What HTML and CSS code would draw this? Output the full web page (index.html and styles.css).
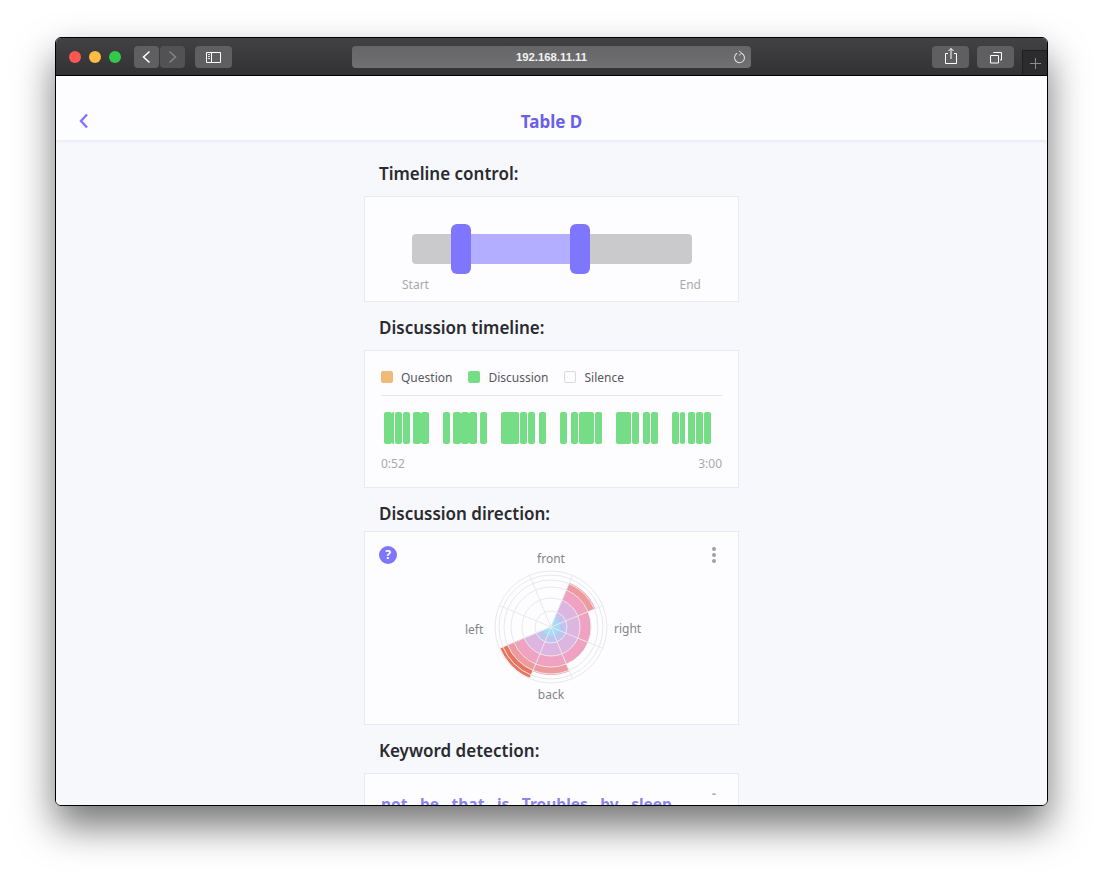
FILE: index.html
```html
<!DOCTYPE html>
<html lang="en">
<head>
    <meta charset="UTF-8">
    <meta name="viewport" content="width=device-width, initial-scale=1.0">
    <title>Table D</title>
    <link rel="stylesheet" href="styles.css">
</head>
<body>
    <div class="window">
        <div class="titlebar">
            <div class="traffic">
                <span class="light light-red"></span>
                <span class="light light-yellow"></span>
                <span class="light light-green"></span>
            </div>
            <div class="history">
                <div class="tool tool-nav">
                    <svg width="25" height="22" viewBox="0 0 25 22"><path d="M15.5 5.5 9.5 11l6 5.5" fill="none" stroke="#fff" stroke-width="1.5"/></svg>
                </div>
                <div class="tool tool-nav tool-off">
                    <svg width="25" height="22" viewBox="0 0 25 22"><path d="M9.5 5.5 15.5 11l-6 5.5" fill="none" stroke="#858587" stroke-width="1.5"/></svg>
                </div>
            </div>
            <div class="tool tool-wide tool-sidebar">
                <svg width="37" height="22" viewBox="0 0 37 22" fill="none" stroke="#fff">
                    <path d="M11.5 6.5h14v10h-14zM16.5 6.5v10"/>
                    <path d="M13 8.5h2M13 10.5h2M13 12.5h2" stroke-width=".8"/>
                </svg>
            </div>
            <div class="urlbar">
                <span class="url">192.168.11.11</span>
                <svg class="reload" width="13" height="14" viewBox="0 0 13 14" fill="none" stroke="#dcdcdc" stroke-width="1.1">
                    <path d="M8.6 3.2a5 5 0 1 1-4.4.1"/>
                    <path d="M6 .8 8.8 3.2 6 5.4" stroke-width="1"/>
                </svg>
            </div>
            <div class="tool tool-wide tool-share">
                <svg width="37" height="22" viewBox="0 0 37 22" fill="none" stroke="#fff">
                    <path d="M16 7.5h-2.5v10h11v-10H22"/>
                    <path d="M19 13V2.5M16.5 5 19 2.5 21.500 5"/>
                </svg>
            </div>
            <div class="tool tool-wide tool-tabs">
                <svg width="37" height="22" viewBox="0 0 37 22" fill="none" stroke="#fff">
                    <path d="M13.500 9.500h8v7.500h-8z"/>
                    <path d="M16.500 7V6.500h8v7.500H23"/>
                </svg>
            </div>
            <div class="newtab">
                <svg width="11" height="11" viewBox="0 0 11 11"><path d="M5.500 0v11M0 5.500h11" stroke="#8c8c8e"/></svg>
            </div>
        </div>

        <div class="page">
            <div class="navbar">
                <svg class="nav-back" width="10" height="16" viewBox="0 0 10 16"><path d="M8 1.500 2 8l6 6.500" fill="none" stroke="#7f76fe" stroke-width="2.400"/></svg>
                <div class="nav-title">Table D</div>
            </div>

            <div class="column">
                <h3 class="heading heading-first">Timeline control:</h3>
                <div class="card card-slider">
                    <div class="slider">
                        <span class="track track-left"></span>
                        <span class="handle"></span>
                        <span class="track-range"></span>
                        <span class="handle"></span>
                        <span class="track track-right"></span>
                    </div>
                    <div class="ends ends-slider">
                        <span>Start</span>
                        <span>End</span>
                    </div>
                </div>

                <h3 class="heading">Discussion timeline:</h3>
                <div class="card card-timeline">
                    <div class="legend">
                        <span class="swatch swatch-question"></span><span class="legend-label">Question</span>
                        <span class="swatch swatch-discussion"></span><span class="legend-label">Discussion</span>
                        <span class="swatch swatch-silence"></span><span class="legend-label">Silence</span>
                    </div>
                    <svg class="bars" width="341" height="32" viewBox="0 0 341 32" fill="#76dd87">
                        <rect x="3" width="8" height="32" rx="2"/><rect x="11" width="2" height="32" rx="1"/>
                        <rect x="14" width="7" height="32" rx="2"/>
                        <rect x="22" width="7" height="32" rx="2"/>
                        <rect x="32" width="8" height="32" rx="2"/><rect x="40" width="8" height="32" rx="2"/>
                        <rect x="62" width="7" height="32" rx="2"/>
                        <rect x="72" width="8" height="32" rx="2"/><rect x="80" width="8" height="32" rx="2"/><rect x="88" width="8" height="32" rx="2"/>
                        <rect x="99" width="7" height="32" rx="2"/>
                        <rect x="120" width="18" height="32" rx="2"/>
                        <rect x="139" width="7" height="32" rx="2"/>
                        <rect x="147" width="7" height="32" rx="2"/>
                        <rect x="158" width="7" height="32" rx="2"/>
                        <rect x="179" width="7" height="32" rx="2"/>
                        <rect x="190" width="7" height="32" rx="2"/>
                        <rect x="198" width="15" height="32" rx="2"/>
                        <rect x="214" width="7" height="32" rx="2"/>
                        <rect x="235" width="15" height="32" rx="2"/>
                        <rect x="251" width="7" height="32" rx="2"/>
                        <rect x="262" width="7" height="32" rx="2"/>
                        <rect x="270" width="7" height="32" rx="2"/>
                        <rect x="291" width="7" height="32" rx="2"/>
                        <rect x="299" width="5" height="32" rx="2"/>
                        <rect x="307" width="7" height="32" rx="2"/>
                        <rect x="315" width="7" height="32" rx="2"/>
                        <rect x="323" width="7" height="32" rx="2"/>
                    </svg>
                    <div class="ends">
                        <span>0:52</span>
                        <span>3:00</span>
                    </div>
                </div>

                <h3 class="heading heading-tight">Discussion direction:</h3>
                <div class="card card-direction">
                    <span class="help">?</span>
                    <svg class="polar" width="200" height="164" viewBox="0 0 200 164">
                        <defs>
                            <clipPath id="s1"><polygon points="100,81 123,25.600 155.400,58"/></clipPath>
                            <clipPath id="s2"><polygon points="100,81 155.400,58 155.400,104"/></clipPath>
                            <clipPath id="s3"><polygon points="100,81 155.400,104 123,136.400"/></clipPath>
                            <clipPath id="s4"><polygon points="100,81 123,136.400 77,136.400"/></clipPath>
                            <clipPath id="s5"><polygon points="100,81 77,136.400 44.600,104"/></clipPath>
                            <g id="core">
                                <circle cx="100" cy="81" r="40" fill="#ef9aa6"/>
                                <circle cx="100" cy="81" r="39" fill="#f0a2c2"/>
                                <circle cx="100" cy="81" r="29" fill="#dcb6e0"/>
                                <circle cx="100" cy="81" r="16" fill="#bfc4f0"/>
                                <circle cx="100" cy="81" r="9" fill="#a0def6"/>
                            </g>
                        </defs>
                        <g clip-path="url(#s1)">
                            <circle cx="100" cy="81" r="48" fill="#ef9aa0"/>
                            <use href="#core"/>
                        </g>
                        <g clip-path="url(#s2)"><use href="#core"/></g>
                        <g clip-path="url(#s3)"><use href="#core"/></g>
                        <g clip-path="url(#s4)">
                            <circle cx="100" cy="81" r="48" fill="#ef9aa0"/>
                            <use href="#core"/>
                        </g>
                        <g clip-path="url(#s5)">
                            <circle cx="100" cy="81" r="55" fill="#e87560"/>
                            <circle cx="100" cy="81" r="47" fill="#ef9aa0"/>
                            <use href="#core"/>
                        </g>
                        <g fill="none" stroke="#e9e9ec">
                            <circle cx="100" cy="81" r="16"/>
                            <circle cx="100" cy="81" r="29"/>
                            <circle cx="100" cy="81" r="40"/>
                            <circle cx="100" cy="81" r="47"/>
                            <circle cx="100" cy="81" r="52"/>
                            <circle cx="100" cy="81" r="56"/>
                            <path d="M100 81 121.400 29.300M100 81 151.700 59.600M100 81 151.700 102.400M100 81 121.400 132.700M100 81 78.600 132.700M100 81 48.300 102.400M100 81 48.300 59.600M100 81 78.600 29.300"/>
                        </g>
                        <text class="polar-label" x="100" y="17" text-anchor="middle">front</text>
                        <text class="polar-label" x="163" y="87">right</text>
                        <text class="polar-label" x="14" y="88">left</text>
                        <text class="polar-label" x="100" y="153" text-anchor="middle">back</text>
                    </svg>
                    <div class="more">
                        <span></span><span></span><span></span>
                    </div>
                </div>

                <h3 class="heading">Keyword detection:</h3>
                <div class="card card-keywords">
                    <div class="keywords">
                        <span>not</span><span>be</span><span>that</span><span>is</span><span>Troubles</span><span>by</span><span>sleep</span>
                    </div>
                    <span class="keywords-more"></span>
                </div>
            </div>
        </div>
    </div>
</body>
</html>
```

FILE: styles.css
```css
body {
    margin: 0;
    padding: 37px 0 0 55px;
    height: 879px;
    box-sizing: border-box;
    overflow: hidden;
    background-color: #fff;
    font-family: "Noto Sans", sans-serif;
}
.window {
    width: 993px;
    height: 769px;
    box-sizing: border-box;
    border: 1px solid #000;
    border-radius: 6px;
    overflow: hidden;
    box-shadow: 0 20px 38px rgba(0, 0, 0, 0.55);
}

/* browser chrome */
.titlebar {
    display: flex;
    align-items: flex-start;
    height: 37px;
    box-sizing: content-box;
    padding-left: 13px;
    border-bottom: 1px solid #000;
    background: linear-gradient(#424244, #323234);
}
.traffic {
    display: flex;
    gap: 8px;
    margin-top: 13px;
}
.light {
    width: 12px;
    height: 12px;
    border-radius: 50%;
}
.light-red { background-color: #fc5753; }
.light-yellow { background-color: #fdbc40; }
.light-green { background-color: #34c84a; }
.history {
    display: flex;
    gap: 1px;
    margin: 8px 0 0 13px;
}
.tool {
    display: flex;
    height: 22px;
    border-radius: 4px;
    background-color: #5f5f61;
}
.tool-nav { width: 25px; }
.tool-off { background-color: #525254; }
.tool-wide {
    width: 37px;
    margin-top: 8px;
}
.tool-sidebar { margin-left: 10px; }
.tool-share { margin-left: auto; }
.tool-tabs { margin-left: 8px; }
.urlbar {
    position: relative;
    display: flex;
    align-items: center;
    justify-content: center;
    width: 399px;
    height: 22px;
    margin: 8px 0 0 120px;
    border-radius: 4px;
    background: linear-gradient(#666668, #707072);
}
.url {
    font-family: "Liberation Sans", Arial, sans-serif;
    font-size: 11.3px;
    font-weight: 700;
    color: #f2f2f2;
}
.reload {
    position: absolute;
    right: 5px;
    top: 4px;
}
.newtab {
    display: flex;
    align-items: center;
    justify-content: center;
    width: 25px;
    height: 25px;
    margin: 12px 0 0 8px;
    box-sizing: border-box;
    border-left: 1px solid #1f1f20;
    border-top: 1px solid #1f1f20;
    background-color: #2c2c2e;
}

/* page */
.page {
    height: 729px;
    overflow: hidden;
    background-color: #f7f8fc;
}
.navbar {
    display: grid;
    grid-template-columns: 1fr auto 1fr;
    align-items: center;
    height: 64px;
    box-sizing: border-box;
    padding: 34px 23px 6px;
    background-color: #fdfdff;
    box-shadow: 0 1px 3px rgba(90, 90, 160, 0.12);
}
.nav-back { margin-top: -2px; }
.nav-title {
    font-size: 17px;
    font-weight: 700;
    line-height: 24px;
    color: #6a60e8;
}
.column {
    width: 375px;
    margin: 0 auto;
}
.heading {
    margin: 14px 0 10px;
    padding-left: 15px;
    font-size: 17px;
    font-weight: 600;
    line-height: 24px;
    color: #2a2a30;
}
.heading-first { margin-top: 22px; }
.heading-tight { margin-bottom: 5px; }
.card {
    box-sizing: border-box;
    border: 1px solid #e9e9f6;
    background-color: #fdfdff;
}

/* timeline control */
.card-slider {
    height: 106px;
    padding: 27px 37px 0;
}
.slider {
    display: flex;
    align-items: center;
    width: 280px;
    margin: 0 auto;
}
.track,
.track-range {
    height: 30px;
}
.track { background-color: #cacacd; }
.track-left {
    width: 39px;
    border-radius: 4px 0 0 4px;
}
.track-right {
    width: 102px;
    border-radius: 0 4px 4px 0;
}
.track-range {
    width: 99px;
    background-color: #b3aeff;
}
.handle {
    width: 20px;
    height: 50px;
    border-radius: 6px;
    background-color: #7f76fe;
}
.ends {
    display: flex;
    justify-content: space-between;
    font-size: 12px;
    line-height: 16px;
    color: #a9a9ad;
}
.ends-slider { margin-top: 3px; }

/* discussion timeline */
.card-timeline {
    height: 138px;
    padding: 17px 16px 0;
}
.legend {
    display: flex;
    align-items: center;
    height: 18px;
    padding-bottom: 9px;
    border-bottom: 1px solid #e4e4f0;
    font-size: 12px;
    color: #57575c;
}
.swatch {
    width: 12px;
    height: 12px;
    box-sizing: border-box;
    border-radius: 2px;
    margin-right: 8px;
}
.swatch-question { background-color: #f0bb76; }
.swatch-discussion { background-color: #76dd87; }
.swatch-silence { border: 1px solid #d8d8ea; }
.legend-label { margin-right: 16px; }
.bars {
    display: block;
    margin: 16px 0 12px;
}

/* discussion direction */
.card-direction {
    display: flex;
    justify-content: space-between;
    align-items: flex-start;
    height: 194px;
    padding: 14px 15px 14px 14px;
}
.help {
    width: 18px;
    height: 18px;
    border-radius: 50%;
    background-color: #7f76fe;
    font-size: 12px;
    font-weight: 700;
    line-height: 18px;
    text-align: center;
    color: #fff;
}
.polar-label {
    font-size: 12px;
    fill: #85858a;
}
.more {
    display: flex;
    flex-direction: column;
    align-items: center;
    gap: 2px;
    width: 18px;
    margin-top: 1px;
}
.more span {
    width: 4px;
    height: 4px;
    border-radius: 50%;
    background-color: #a0a0a8;
}

/* keyword detection */
.card-keywords {
    position: relative;
    height: 120px;
    padding: 18px 16px 0;
}
.keywords {
    display: flex;
    gap: 12.5px;
    font-size: 15.5px;
    font-weight: 700;
    line-height: 24px;
    color: #8a84ee;
}
.keywords-more {
    position: absolute;
    top: 19px;
    right: 22px;
    width: 4px;
    height: 2px;
    border-radius: 2px 2px 0 0;
    background-color: #b4b4ba;
}
```
